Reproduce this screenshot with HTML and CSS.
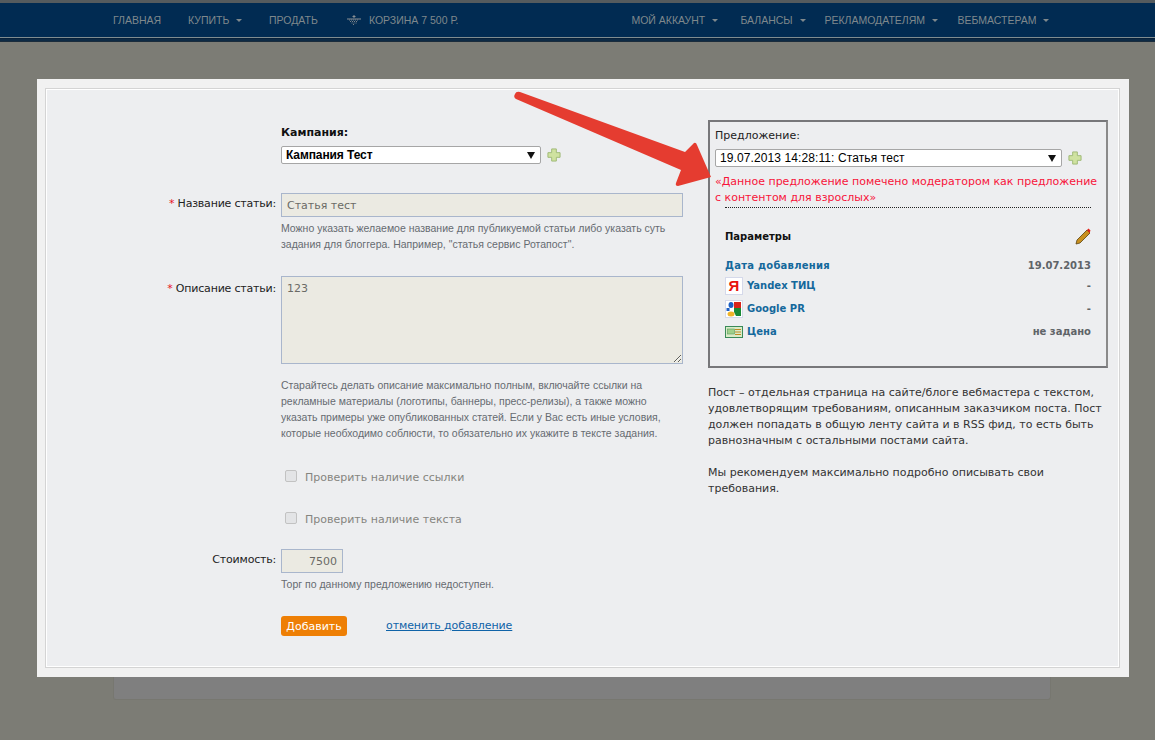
FILE: index.html
```html
<!DOCTYPE html>
<html lang="ru">
<head>
  <meta charset="UTF-8" />
  <meta name="viewport" content="width=device-width, initial-scale=1.0" />
  <title>Добавление поста</title>
  <link rel="stylesheet" href="styles.css">
</head>
<body>

  <nav class="topbar">
    <ul class="menu">
      <li class="w-glavnaya">Главная</li>
      <li class="w-kupit">Купить <span class="caret"></span></li>
      <li class="w-prodat">Продать</li>
      <li class="cart">
        <svg width="14" height="10" viewBox="0 0 14 10"><path d="M7 0v3M5.500 1.500h3M0 4h14" stroke="#8a9094" fill="none"/><path d="M2 5h10M3 6.500h8M4.500 8h5M6 9.500h2" stroke="#7d8388" stroke-dasharray="1 1" fill="none"/></svg>
        Корзина 7 500 р.
      </li>
    </ul>
    <ul class="menu menu-right">
      <li class="w-akkaunt">Мой аккаунт <span class="caret"></span></li>
      <li class="w-balansy">Балансы <span class="caret"></span></li>
      <li class="w-reklama">Рекламодателям <span class="caret"></span></li>
      <li>Вебмастерам <span class="caret"></span></li>
    </ul>
  </nav>
  <div class="bar-stripes"></div>

  <div class="page-card"></div>

  <div class="modal">
    <div class="frame">

      <form class="add-form">
        <div class="row row-campaign">
          <div></div>
          <div>
            <div class="campaign-title">Кампания:</div>
            <div class="select-line">
              <div class="select-box campaign-select">
                <select><option>Кампания Тест</option></select>
              </div>
              <svg class="plus" width="14" height="14" viewBox="0 0 15 15"><path d="M5 1h5v4h4v5h-4v4H5v-4H1V5h4z" fill="#cfe2a0" stroke="#9db873"/></svg>
            </div>
          </div>
        </div>

        <div class="row row-name">
          <label class="label"><span class="req">*</span> Название статьи:</label>
          <div>
            <input class="field" type="text" value="Статья тест" readonly>
            <p class="hint">Можно указать желаемое название для публикуемой статьи либо указать суть задания для блоггера. Например, "статья сервис Ротапост".</p>
          </div>
        </div>

        <div class="row row-desc">
          <label class="label label-desc"><span class="req">*</span> Описание статьи:</label>
          <div>
            <textarea class="field area" readonly>123</textarea>
            <p class="hint hint-desc">Старайтесь делать описание максимально полным, включайте ссылки на рекламные материалы (логотипы, баннеры, пресс-релизы), а также можно указать примеры уже опубликованных статей. Если у Вас есть иные условия, которые необходимо соблюсти, то обязательно их укажите в тексте задания.</p>
          </div>
        </div>

        <div class="row row-check">
          <div></div>
          <label class="check"><input type="checkbox" disabled> Проверить наличие ссылки</label>
        </div>
        <div class="row row-check2">
          <div></div>
          <label class="check"><input type="checkbox" disabled> Проверить наличие текста</label>
        </div>

        <div class="row row-price">
          <label class="label">Стоимость:</label>
          <div>
            <input class="field price" type="text" value="7500" readonly>
            <p class="hint hint-price">Торг по данному предложению недоступен.</p>
          </div>
        </div>

        <div class="row row-actions">
          <div></div>
          <div class="actions">
            <button type="button" class="btn-add">Добавить</button>
            <a href="#" class="cancel">отменить добавление</a>
          </div>
        </div>
      </form>

      <aside class="side">
        <div class="offer">
          <div class="offer-title">Предложение:</div>
          <div class="select-line">
            <div class="select-box offer-select">
              <select><option>19.07.2013 14:28:11: Статья тест</option></select>
            </div>
            <svg class="plus" width="14" height="14" viewBox="0 0 15 15"><path d="M5 1h5v4h4v5h-4v4H5v-4H1V5h4z" fill="#cfe2a0" stroke="#9db873"/></svg>
          </div>
          <p class="warning">«Данное предложение помечено модератором как предложение с контентом для взрослых»</p>

          <div class="params">
            <div class="params-head">
              <b>Параметры</b>
              <svg width="16" height="17" viewBox="0 0 16 17"><path d="M1 16l1-4L12 2l3 3L5 15z" fill="#c9901f" stroke="#5a4210" stroke-width=".8"/><path d="M12 2l1.500-1.500 2 2L14.500 5z" fill="#e2231a"/></svg>
            </div>
            <div class="param param-date"><span class="param-name">Дата добавления</span><span class="param-val">19.07.2013</span></div>
            <div class="param">
              <span class="param-name"><span class="ico ico-ya">Я</span>Yandex ТИЦ</span><span class="param-val">-</span>
            </div>
            <div class="param">
              <span class="param-name">
                <svg class="ico" width="18" height="18" viewBox="0 0 18 18"><rect x=".5" y=".5" width="17" height="17" fill="#fff" stroke="#d5d9ea"/><ellipse cx="6" cy="5" rx="2.500" ry="3" fill="#1c5fc4"/><path d="M9 2h7v6H9z" fill="#d8241c"/><path d="M9 8h7v8h-5l-2-4z" fill="#1a8a36"/><path d="M1.500 8h3v3h-3z" fill="#1c5fc4"/><ellipse cx="6" cy="14" rx="3.500" ry="2.500" fill="#f0b428"/></svg>
                Google PR</span><span class="param-val">-</span>
            </div>
            <div class="param">
              <span class="param-name">
                <svg class="ico ico-price" width="18" height="12" viewBox="0 0 18 12"><rect x=".5" y=".5" width="17" height="11" fill="#d9ecc8" stroke="#3a8a58"/><rect x="2.500" y="3" width="7" height="5" fill="#9fd08a" stroke="#5a9a60" stroke-width=".6"/><path d="M10 3.500h6M10 6h6M10 8.500h6" stroke="#c08a20"/></svg>
                Цена</span><span class="param-val">не задано</span>
            </div>
          </div>
        </div>

        <p class="about">Пост – отдельная страница на сайте/блоге вебмастера с текстом, удовлетворящим требованиям, описанным заказчиком поста. Пост должен попадать в общую ленту сайта и в RSS фид, то есть быть равнозначным с остальными постами сайта.</p>
        <p class="about about-last">Мы рекомендуем максимально подробно описывать свои требования.</p>
      </aside>

    </div>
  </div>

  <svg class="arrow" width="220" height="110" viewBox="0 0 220 110">
    <path d="M5 4 Q6 1 10 2 L175 62 L184 53 Q186 52 187 55 L201 87 L168 96 Q165 96 166 93 L171 80 L6 9 Q3 7 5 4z" fill="#e53c30"/>
  </svg>

</body>
</html>
```

FILE: styles.css
```css
* {
  box-sizing: border-box;
}

body {
  margin: 0;
  height: 740px;
  overflow: hidden;
  position: relative;
  background: #7c7c75;
  font-family: "DejaVu Sans", Tahoma, sans-serif;
  font-size: 11px;
  color: #222;
}

/* top bar */
.topbar {
  height: 38px;
  background: #012b52;
  border-top: 3px solid #555b5e;
  border-bottom: 1px solid #7f8c90;
  padding-left: 113px;
  display: flex;
  font-family: "Liberation Sans", sans-serif;
  font-size: 10.5px;
  color: #7f888c;
  text-transform: uppercase;
}

.bar-stripes {
  height: 4px;
  background: #0d2a44;
  border-top: 1px solid #06203a;
  border-bottom: 1px solid #1a2c3c;
}

.menu {
  list-style: none;
  margin: 0;
  padding: 0;
  display: flex;
  align-items: center;
  height: 34px;
}

.menu-right {
  margin-left: 173px;
}

.menu li {
  white-space: nowrap;
}

.w-glavnaya { width: 75px; }
.w-kupit { width: 81px; }
.w-prodat { width: 78px; }
.w-akkaunt { width: 109px; }
.w-balansy { width: 84px; }
.w-reklama { width: 133px; }

.cart svg {
  margin-right: 5px;
  vertical-align: -1px;
}

.caret {
  display: inline-block;
  margin-left: 4px;
  vertical-align: 2px;
  border-left: 3px solid transparent;
  border-right: 3px solid transparent;
  border-top: 3px solid #7f888c;
}

.page-card {
  width: 938px;
  height: 620px;
  margin: 38px 0 0 113px;
  background: #7f7f7f;
  border: 1px solid #777770;
  border-top: 0;
  border-radius: 0 0 3px 3px;
}

/* modal */
.modal {
  position: absolute;
  left: 37px;
  top: 79px;
  width: 1092px;
  height: 598px;
  background: #f1f1f1;
  padding: 9px 9px 9px 8px;
}

.frame {
  height: 100%;
  background: #edeef0;
  border: 1px solid #d4d4d4;
  box-shadow: inset 0 0 0 1px #fff;
  display: flex;
}

.add-form {
  width: 662px;
  flex: none;
}

.row {
  display: grid;
  grid-template-columns: 230px 402px;
  column-gap: 5px;
}

.row-campaign { margin-top: 37px; }
.row-name { margin-top: 29px; }
.row-desc { margin-top: 24px; }
.row-check { margin-top: 28px; }
.row-check2 { margin-top: 26px; }
.row-price { margin-top: 22px; }
.row-actions { margin-top: 24px; }

.label {
  text-align: right;
  line-height: 18px;
  padding-top: 2px;
  white-space: nowrap;
  letter-spacing: -0.2px;
}

.label-desc {
  padding-top: 4px;
}

.req {
  color: #e8111f;
}

.campaign-title {
  font-weight: bold;
  line-height: 14px;
  margin-bottom: 6px;
  color: #111;
}

.select-line {
  display: flex;
  align-items: center;
}

.plus {
  margin-left: 6px;
}

.select-box {
  position: relative;
  height: 18px;
}

.select-box::after {
  content: "";
  position: absolute;
  right: 6px;
  top: 6px;
  border-left: 4px solid transparent;
  border-right: 4px solid transparent;
  border-top: 7px solid #111;
}

.select-box select {
  appearance: none;
  width: 100%;
  height: 18px;
  padding: 0 4px;
  background: #fff;
  border: 1px solid #a6a6a6;
  border-radius: 2px;
  font-family: "Liberation Sans", sans-serif;
  font-size: 12px;
  color: #000;
}

.campaign-select { width: 260px; }
.campaign-select select {
  font-weight: bold;
  letter-spacing: -0.1px;
}
.offer-select { width: 347px; }
.offer-select select {
  letter-spacing: 0.1px;
}

.field {
  display: block;
  width: 402px;
  height: 24px;
  padding: 0 5px;
  background: #ebeae2;
  border: 1px solid #a9b6cc;
  font-family: "DejaVu Sans", Tahoma, sans-serif;
  font-size: 11px;
  color: #6a6a66;
  outline: none;
}

.area {
  height: 88px;
  padding-top: 5px;
}

.price {
  width: 62px;
  text-align: right;
}

.hint {
  margin: 3px 0 0;
  font-family: "Liberation Sans", sans-serif;
  font-size: 10.5px;
  line-height: 16px;
  color: #666b70;
}

.hint-desc { margin-top: 13px; }
.hint-price { margin-top: 3px; }

.check {
  display: flex;
  align-items: center;
  height: 16px;
  padding-left: 4px;
  color: #85857f;
}

.check input {
  appearance: none;
  width: 12px;
  height: 12px;
  margin: -3px 8px 0 0;
  background: #e3e4e6;
  border: 1px solid #c2c2c2;
  border-radius: 2px;
}

.actions {
  display: flex;
  align-items: center;
}

.btn-add {
  width: 66px;
  height: 20px;
  padding: 0;
  background: #ee7f05;
  border: 0;
  border-radius: 3px;
  font-family: "DejaVu Sans", Tahoma, sans-serif;
  font-size: 11px;
  color: #fff;
}

.cancel {
  margin: 0 0 2px 39px;
  color: #0f63a8;
  letter-spacing: -0.1px;
}

/* right side */
.side {
  width: 400px;
  flex: none;
}

.offer {
  height: 248px;
  margin-top: 31px;
  padding: 7px 5px 0;
  border: 2px solid #77777a;
  border-right-color: #8a8a8a;
}

.offer-title {
  line-height: 14px;
  margin-bottom: 6px;
  color: #222;
}

.warning {
  margin: 7px 0 0;
  line-height: 16px;
  color: #f7143a;
}

.params {
  margin: 1px 10px 0 10px;
  padding-top: 20px;
  border-top: 1px dotted #222;
  font-size: 10px;
}

.params-head {
  display: flex;
  justify-content: space-between;
  align-items: center;
  height: 17px;
  margin-bottom: 12px;
}

.params-head b {
  color: #111;
}

.param {
  display: flex;
  justify-content: space-between;
  align-items: center;
  height: 23px;
  font-weight: bold;
}

.param-date {
  height: 16px;
  margin-bottom: 1px;
}

.param-date .param-name {
  letter-spacing: 0.25px;
}

.param-name {
  display: flex;
  align-items: center;
  color: #14689c;
}

.param-val {
  color: #5f6468;
}

.ico {
  margin-right: 4px;
  flex: none;
}

.ico-ya {
  width: 18px;
  height: 18px;
  margin-right: 4px;
  background: #fff;
  border: 1px solid #d5d9ea;
  color: #e8120c;
  font-family: "Liberation Sans", sans-serif;
  font-size: 15px;
  font-weight: bold;
  line-height: 16px;
  text-align: center;
}

.about {
  margin: 17px 0 0;
  font-size: 11px;
  line-height: 16px;
  color: #333;
}

.about-last {
  margin-top: 16px;
}

.arrow {
  position: absolute;
  left: 510px;
  top: 90px;
}
```
